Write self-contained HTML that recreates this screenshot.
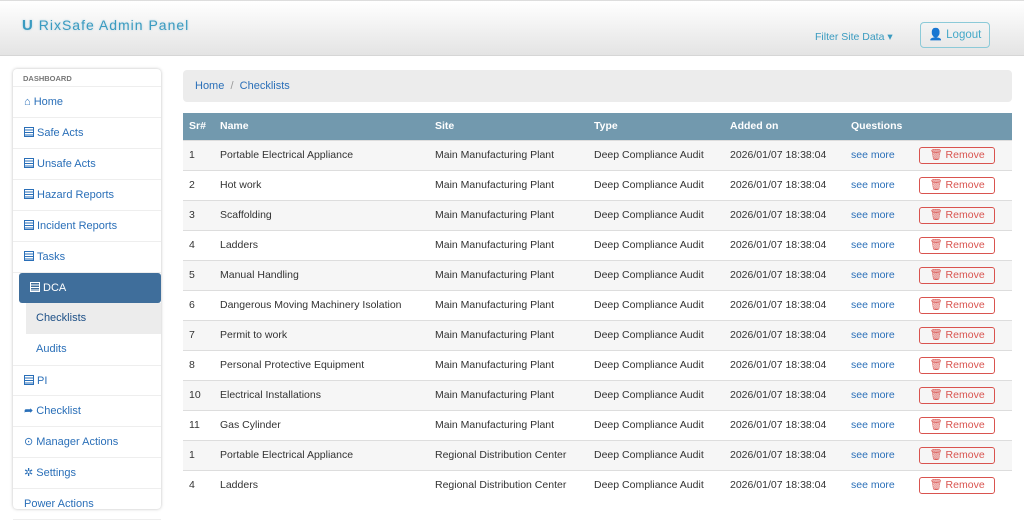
<!DOCTYPE html>
<html><head><meta charset="utf-8"><style>
*{box-sizing:border-box;margin:0;padding:0}
body{width:1024px;height:504px;overflow:hidden;background:#fff;font-family:"Liberation Sans",Arial,sans-serif;font-size:11px;color:#333;position:relative}
.hdr{position:absolute;left:0;top:0;width:1024px;height:56px;background:linear-gradient(#fff,#e4e4e4);border-top:1px solid #ddd;border-bottom:1px solid #d6d6d6}
.logo{position:absolute;left:22px;top:16px;font-size:14px;letter-spacing:1px;color:#3a9bc0;text-shadow:0 0 2px rgba(80,160,200,.4)}
.filter{position:absolute;left:815px;top:30px;color:#3a9bc0;font-size:10.5px}
.logout{position:absolute;left:920px;top:21px;width:70px;height:26px;border:1px solid #8ccad8;border-radius:4px;color:#45a9c8;font-size:11.5px;text-align:center;line-height:24px}
.side{position:absolute;left:13px;top:69px;width:148px;height:440px;background:#fff;border-radius:4px;box-shadow:0 0 3px rgba(0,0,0,.25)}
.side .dh{height:18px;font-size:7.5px;font-weight:bold;color:#777;padding:5px 0 0 10px;border-bottom:1px solid #eee}
.side .it{height:31px;line-height:31px;padding-left:11px;color:#2a6fb8;font-size:11px;border-bottom:1px solid #eee}
.side .act{margin:0 0 0 6px;background:#3f6e9b;color:#fff;border-radius:3px;height:30px;line-height:30px;padding-left:11px;font-size:11px}
.side .sub{margin-left:13px;height:31px;line-height:31px;padding-left:10px;color:#2a6fb8;font-size:11px}
.ic{display:inline-block;width:10px;height:10px;border:1.5px solid currentColor;margin-right:3px;vertical-align:-1px;background:repeating-linear-gradient(#fff 0 1.5px,currentColor 1.5px 2.5px)}
.bc{position:absolute;left:183px;top:70px;width:829px;height:32px;background:#ececec;border-radius:4px;padding:10px 12px;color:#2a6fb8;font-size:11px}
table{position:absolute;left:183px;top:113px;width:829px;border-collapse:collapse;font-size:10.5px}
th{background:#7299ae;color:#fff;text-align:left;height:27px;font-size:10.5px;padding-left:6px}
td{height:30px;border-top:1px solid #ddd;padding-left:6px}
tr:nth-child(even) td{background:#f6f6f6}
.sm{color:#2a6fb8}
.rm{display:inline-block;width:76px;height:17px;border:1px solid #d9534f;border-radius:3px;color:#d9534f;text-align:center;line-height:15px;font-size:10.5px}
</style></head><body>
<div class="hdr"><div class="logo"><b style="font-size:15px">U</b> RixSafe Admin Panel</div>
<div class="filter">Filter Site Data ▾</div><div class="logout">👤 Logout</div></div>
<div class="side"><div class="dh">DASHBOARD</div>
<div class="it">⌂ Home</div><div class="it"><span class="ic"></span>Safe Acts</div><div class="it"><span class="ic"></span>Unsafe Acts</div><div class="it"><span class="ic"></span>Hazard Reports</div><div class="it"><span class="ic"></span>Incident Reports</div><div class="it"><span class="ic"></span>Tasks</div>
<div class="act"><span class="ic" style="background:repeating-linear-gradient(#3f6e9b 0 1.5px,#fff 1.5px 2.5px)"></span>DCA</div>
<div class="sub" style="background:#ececec;color:#1c4f86">Checklists</div><div class="sub">Audits</div>
<div class="it" style="border-top:1px solid #eee"><span class="ic"></span>PI</div><div class="it">➦ Checklist</div><div class="it">⊙ Manager Actions</div><div class="it">✲ Settings</div><div class="it">Power Actions</div></div>
<div class="bc">Home &nbsp;<span style="color:#999">/</span>&nbsp; Checklists</div>
<table>
<tr><th style="width:31px">Sr#</th><th style="width:215px">Name</th><th style="width:159px">Site</th><th style="width:136px">Type</th><th style="width:121px">Added on</th><th style="width:68px">Questions</th><th></th></tr>
<tr><td>1</td><td>Portable Electrical Appliance</td><td>Main Manufacturing Plant</td><td>Deep Compliance Audit</td><td>2026/01/07 18:38:04</td><td class="sm">see more</td><td><span class="rm">🗑 Remove</span></td></tr>
<tr><td>2</td><td>Hot work</td><td>Main Manufacturing Plant</td><td>Deep Compliance Audit</td><td>2026/01/07 18:38:04</td><td class="sm">see more</td><td><span class="rm">🗑 Remove</span></td></tr>
<tr><td>3</td><td>Scaffolding</td><td>Main Manufacturing Plant</td><td>Deep Compliance Audit</td><td>2026/01/07 18:38:04</td><td class="sm">see more</td><td><span class="rm">🗑 Remove</span></td></tr>
<tr><td>4</td><td>Ladders</td><td>Main Manufacturing Plant</td><td>Deep Compliance Audit</td><td>2026/01/07 18:38:04</td><td class="sm">see more</td><td><span class="rm">🗑 Remove</span></td></tr>
<tr><td>5</td><td>Manual Handling</td><td>Main Manufacturing Plant</td><td>Deep Compliance Audit</td><td>2026/01/07 18:38:04</td><td class="sm">see more</td><td><span class="rm">🗑 Remove</span></td></tr>
<tr><td>6</td><td>Dangerous Moving Machinery Isolation</td><td>Main Manufacturing Plant</td><td>Deep Compliance Audit</td><td>2026/01/07 18:38:04</td><td class="sm">see more</td><td><span class="rm">🗑 Remove</span></td></tr>
<tr><td>7</td><td>Permit to work</td><td>Main Manufacturing Plant</td><td>Deep Compliance Audit</td><td>2026/01/07 18:38:04</td><td class="sm">see more</td><td><span class="rm">🗑 Remove</span></td></tr>
<tr><td>8</td><td>Personal Protective Equipment</td><td>Main Manufacturing Plant</td><td>Deep Compliance Audit</td><td>2026/01/07 18:38:04</td><td class="sm">see more</td><td><span class="rm">🗑 Remove</span></td></tr>
<tr><td>10</td><td>Electrical Installations</td><td>Main Manufacturing Plant</td><td>Deep Compliance Audit</td><td>2026/01/07 18:38:04</td><td class="sm">see more</td><td><span class="rm">🗑 Remove</span></td></tr>
<tr><td>11</td><td>Gas Cylinder</td><td>Main Manufacturing Plant</td><td>Deep Compliance Audit</td><td>2026/01/07 18:38:04</td><td class="sm">see more</td><td><span class="rm">🗑 Remove</span></td></tr>
<tr><td>1</td><td>Portable Electrical Appliance</td><td>Regional Distribution Center</td><td>Deep Compliance Audit</td><td>2026/01/07 18:38:04</td><td class="sm">see more</td><td><span class="rm">🗑 Remove</span></td></tr>
<tr><td>4</td><td>Ladders</td><td>Regional Distribution Center</td><td>Deep Compliance Audit</td><td>2026/01/07 18:38:04</td><td class="sm">see more</td><td><span class="rm">🗑 Remove</span></td></tr>
</table>
</body></html>
